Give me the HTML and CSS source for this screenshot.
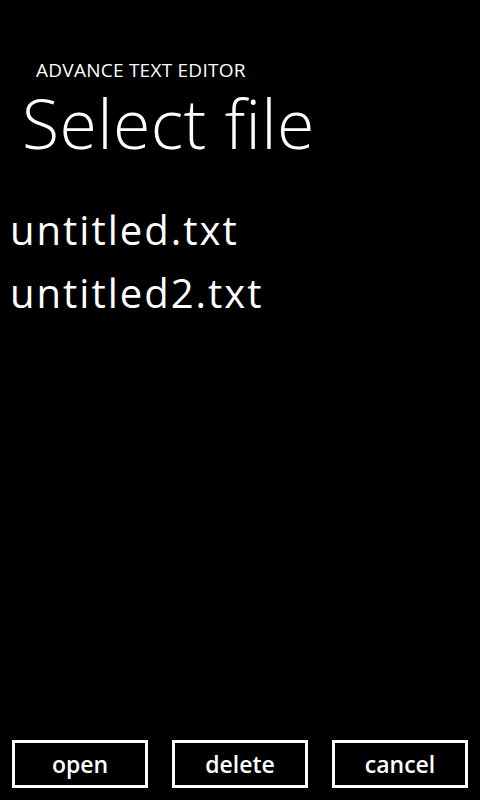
FILE: index.html
```html
<!DOCTYPE html>
<html>
<head>
<meta charset="utf-8">
<link rel="stylesheet" href="styles.css">
</head>
<body>
<div class="page">
  <header class="titles">
    <div class="app-title">ADVANCE TEXT EDITOR</div>
    <h1 class="page-title">Select file</h1>
  </header>
  <ul class="files">
    <li class="file">untitled.txt</li>
    <li class="file">untitled2.txt</li>
  </ul>
  <div class="actions">
    <button class="btn">open</button>
    <button class="btn">delete</button>
    <button class="btn">cancel</button>
  </div>
</div>
</body>
</html>
```
FILE: styles.css
```css
html, body {
  margin: 0;
  padding: 0;
  background: #000;
}
.page {
  width: 480px;
  height: 800px;
  display: flex;
  flex-direction: column;
  color: #fff;
  font-family: "Open Sans", "Noto Sans", sans-serif;
}
.titles {
  padding: 60px 0 0 22px;
}
.app-title {
  margin-left: 14px;
  font-size: 19px;
  line-height: 20px;
  letter-spacing: 0.25px;
}
.page-title {
  margin: 9px 0 0;
  font-size: 68px;
  font-weight: 300;
  line-height: 68px;
  letter-spacing: 0.4px;
}
.files {
  list-style: none;
  margin: 41px 0 0;
  padding: 0 0 0 10px;
  flex: 1;
}
.file {
  font-size: 40px;
  line-height: 63px;
  letter-spacing: 2px;
}
.actions {
  display: flex;
  gap: 24px;
  padding: 0 12px 12px;
}
.btn {
  flex: 1;
  height: 48px;
  background: #000;
  color: #fff;
  border: 3px solid #fff;
  font-family: inherit;
  font-size: 23px;
  font-weight: 600;
  padding: 0;
}
```
